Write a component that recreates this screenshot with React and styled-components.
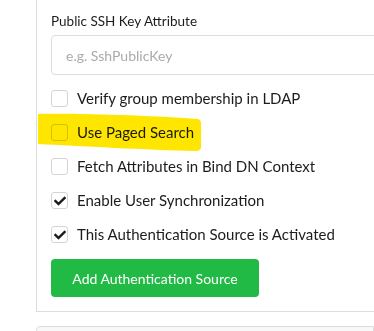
import React from "react";
import styled, { createGlobalStyle } from "styled-components";
import { FaCheck } from "react-icons/fa";

const GlobalStyle = createGlobalStyle`
  html, body {
    margin: 0;
    padding: 0;
    background: #ffffff;
  }
  body {
    font-family: Lato, "Noto Sans", sans-serif;
    color: #1b1c1d;
  }
`;

const Page = styled.div`
  width: 374px;
  height: 331px;
  overflow: hidden;
  padding-left: 36px;
  box-sizing: border-box;
`;

const Panel = styled.div`
  border-left: 1px solid #dddddd;
  border-bottom: 1px solid #dddddd;
  padding: 12px 0 14px 14px;
  position: relative;
`;

const Label = styled.label`
  display: block;
  font-size: 13.5px;
  line-height: 18px;
  margin-bottom: 5px;
`;

const Input = styled.input`
  display: block;
  box-sizing: border-box;
  width: 400px;
  height: 40px;
  border: 1px solid #dddddd;
  border-radius: 4px;
  padding: 0 14px;
  font-family: inherit;
  font-size: 14px;
  color: #333;
  outline: none;
  &::placeholder {
    color: #aaaaaa;
  }
`;

const Checks = styled.div`
  display: flex;
  flex-direction: column;
  gap: 17px;
  margin-top: 15px;
`;

const Row = styled.div`
  display: flex;
  align-items: center;
  gap: 9px;
  height: 17px;
`;

const Box = styled.span`
  width: 17px;
  height: 17px;
  box-sizing: border-box;
  border: 1px solid #d4d4d5;
  border-radius: 3px;
  background: #fff;
  display: flex;
  align-items: center;
  justify-content: center;
  color: #1b1c1d;
  font-size: 12px;
`;

const Text = styled.span`
  font-size: 15px;
  line-height: 17px;
  color: #1b1c1d;
`;

const Button = styled.button`
  margin-top: 16px;
  width: 208px;
  height: 38px;
  border: none;
  border-radius: 4px;
  background: #21ba45;
  color: #fff;
  font-family: inherit;
  font-size: 14px;
  cursor: pointer;
`;

const Marker = styled.svg`
  position: absolute;
  left: 1px;
  top: 113px;
  mix-blend-mode: multiply;
  pointer-events: none;
`;

const NextPanel = styled.div`
  margin-top: 14px;
  height: 20px;
  background: #f8f8f8;
  border: 1px solid #dddddd;
  border-radius: 4px 0 0 0;
`;

const Checkbox = ({ checked, children }) => (
  <Row>
    <Box>{checked && <FaCheck />}</Box>
    <Text>{children}</Text>
  </Row>
);

export default function App() {
  return (
    <>
      <GlobalStyle />
      <Page>
        <Panel>
          <Label>Public SSH Key Attribute</Label>
          <Input placeholder="e.g. SshPublicKey" />
          <Checks>
            <Checkbox>Verify group membership in LDAP</Checkbox>
            <Checkbox>Use Paged Search</Checkbox>
            <Checkbox>Fetch Attributes in Bind DN Context</Checkbox>
            <Checkbox checked>Enable User Synchronization</Checkbox>
            <Checkbox checked>This Authentication Source is Activated</Checkbox>
          </Checks>
          <Button>Add Authentication Source</Button>
          <Marker width="164" height="40" viewBox="0 0 164 40">
            <path
              d="M0 1 C40 0 120 3 160 6 Q163 7 163 10 L163 35 Q162 38 158 38 C110 37 40 33 0 31 Z"
              fill="#ffe600"
            />
          </Marker>
        </Panel>
        <NextPanel />
      </Page>
    </>
  );
}
